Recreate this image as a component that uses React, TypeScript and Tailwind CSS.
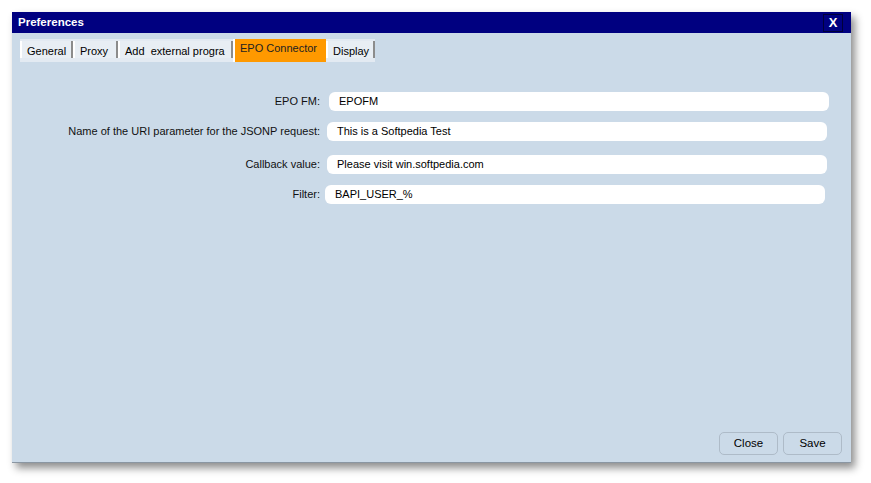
const tabs = [
  { name: "General", w: "w-[53px]" },
  { name: "Proxy", w: "w-[45px]" },
  { name: "Add  external progra", w: "w-[115px]" },
  { name: "EPO Connector", w: "w-[93px]", active: true },
  { name: "Display", w: "w-[49px]" },
];

const fields = [
  { label: "EPO FM:", value: "EPOFM", mt: "mt-0", ml: "ml-[9px]" },
  { label: "Name of the URI parameter for the JSONP request:", value: "This is a Softpedia Test", mt: "mt-[11px]", ml: "ml-[7px]" },
  { label: "Callback value:", value: "Please visit win.softpedia.com", mt: "mt-[14px]", ml: "ml-[7px]" },
  { label: "Filter:", value: "BAPI_USER_%", mt: "mt-[11px]", ml: "ml-[5px]" },
];

export default function App() {
  return (
    <div
      className="w-[871px] h-[483px] bg-white pt-[12px] pl-[12px]"
      style={{ fontFamily: '"Liberation Sans", Arial, sans-serif' }}
    >
      <div className="w-[839px] h-[451px] flex flex-col bg-[#cbdae8] border-b border-[#8a96a2] shadow-[4px_5px_8px_rgba(0,0,0,0.45)]">
        {/* title bar */}
        <div className="h-[21px] bg-[#000080] flex items-center justify-between pl-[6px] pr-[8px]">
          <span className="text-white text-[11.5px] font-bold">Preferences</span>
          <div className="w-[20px] h-[18px] border border-[#00003a] flex items-center justify-center">
            <span className="text-white text-[13px] font-bold leading-none">X</span>
          </div>
        </div>

        {/* tabs */}
        <div className="ml-[8px] mt-[6px] w-fit flex items-start bg-[#e3eaf2] h-[23px]">
          {tabs.map((t) =>
            t.active ? (
              <div
                key={t.name}
                className={`${t.w} h-[23px] bg-[#ff9900] border-l-2 border-white text-[11px] text-[#222] pl-[5px] pt-[4px] leading-none whitespace-nowrap`}
              >
                {t.name}
              </div>
            ) : (
              <div
                key={t.name}
                className={`${t.w} h-[17px] mt-[2px] bg-[#e8eef4] border-l-2 border-white border-r-2 border-r-[#8c8c8c] text-[11px] text-black pl-[5px] pt-[5px] leading-none overflow-hidden whitespace-pre`}
              >
                {t.name}
              </div>
            )
          )}
        </div>

        {/* form */}
        <div className="mt-[30px] flex flex-col">
          {fields.map((f) => (
            <div key={f.label} className={`flex items-center ${f.mt}`}>
              <div className="w-[308px] text-right text-[11px] text-[#111]">{f.label}</div>
              <div
                className={`${f.ml} w-[500px] h-[19px] bg-white rounded-[6px] flex items-center pl-[10px] text-[11px] text-black`}
              >
                {f.value}
              </div>
            </div>
          ))}
        </div>

        <div className="flex-1" />

        {/* buttons */}
        <div className="flex justify-end gap-[5px] pr-[9px] pb-[7px]">
          <button className="w-[59px] h-[23px] rounded-[5px] border border-[#aebbc8] text-[11.5px] text-black">
            Close
          </button>
          <button className="w-[59px] h-[23px] rounded-[5px] border border-[#aebbc8] text-[11.5px] text-black">
            Save
          </button>
        </div>
      </div>
    </div>
  );
}
